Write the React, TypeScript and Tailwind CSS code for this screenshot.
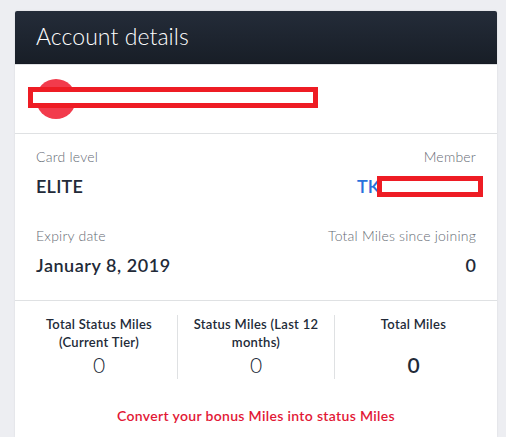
import { clsx } from "clsx";

const stats = [
  { label: "Total Status Miles (Current Tier)", value: "0", strong: false },
  { label: "Status Miles (Last 12 months)", value: "0", strong: false },
  { label: "Total Miles", value: "0", strong: true },
];

function Label({ children }: { children: string }) {
  return (
    <p className="h-5 text-[14px] leading-5 font-light tracking-[0.22px] whitespace-nowrap text-[#656b74]">
      {children}
    </p>
  );
}

export default function App() {
  return (
    <div className="h-[437px] overflow-hidden bg-[#edeef2] pt-[11px] pl-[15px] font-['Lato','Noto_Sans',sans-serif]">
      <div className="h-[426px] w-[482px] rounded-t-[2px] bg-white shadow-[0_0_2px_rgba(30,40,60,0.12)]">
        <header className="flex h-[53px] items-center rounded-t-[2px] border-b border-[#151a23] bg-linear-to-b from-[#242c39] to-[#181e27] px-[21px] pb-[3px]">
          <h1 className="text-[23px] leading-7 font-light tracking-[0.07px] text-white">Account details</h1>
        </header>

        <section className="relative h-[70px] border-y border-[#dfe1e3] px-[21px] pt-[14px]">
          <div className="size-10 rounded-full bg-[#f23b4c]" />
          {/* Redacted member name */}
          <div className="absolute top-[22px] left-[13px] h-[21px] w-[290px] border-5 border-[#ee1c24] bg-white" />
        </section>

        <section className="flex h-[167px] flex-col gap-[29px] border-b border-[#dfe1e3] px-[21px] pt-[13px]">
          <div className="flex h-[50px] justify-between">
            <div>
              <Label>Card level</Label>
              <p className="mt-2 text-[18px] leading-[22px] font-semibold tracking-[0.25px] text-[#222a38]">ELITE</p>
            </div>
            <div className="relative w-[120px] text-right">
              <Label>Member</Label>
              <p className="mt-2 pl-px text-left text-[18px] leading-[22px] font-semibold text-[#2871dc]">TK</p>
              {/* Redacted member number */}
              <div className="absolute top-[29px] left-[21px] h-[21px] w-[106px] border-5 border-[#ee1c24] bg-white" />
            </div>
          </div>
          <div className="flex h-[50px] justify-between">
            <div>
              <Label>Expiry date</Label>
              <p className="mt-2 text-[18px] leading-[22px] font-semibold tracking-[0.55px] text-[#222a38]">January 8, 2019</p>
            </div>
            <div className="text-right">
              <Label>Total Miles since joining</Label>
              <p className="mt-2 text-[18px] leading-[22px] font-semibold text-[#222a38]">0</p>
            </div>
          </div>
        </section>

        <section className="flex pt-[14px] pl-[6px]">
          {stats.map((stat, i) => (
            <div
              key={stat.label}
              className={clsx("flex h-16 w-[157px] flex-col items-center", i < 2 && "border-r border-[#dfe1e3]")}
            >
              <p className="h-9 w-[132px] text-center text-[13px] leading-[18px] font-semibold tracking-[0.28px] text-[#222a38]">
                {stat.label}
              </p>
              <p
                className={clsx(
                  "text-[21px] leading-7 text-[#222a38]",
                  stat.strong ? "font-semibold" : "font-light",
                )}
              >
                {stat.value}
              </p>
            </div>
          ))}
        </section>

        <a className="mt-[27px] block text-center text-[14px] leading-5 font-semibold tracking-[0.33px] text-[#e21836]">
          Convert your bonus Miles into status Miles
        </a>
      </div>
    </div>
  );
}
